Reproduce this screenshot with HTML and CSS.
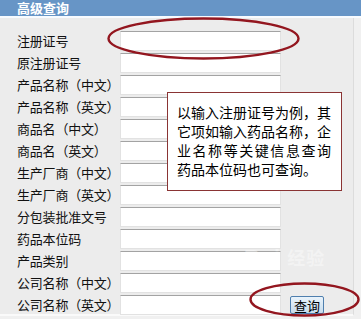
FILE: index.html
```html
<!DOCTYPE html>
<html lang="zh-CN">
<head>
<meta charset="utf-8">
<link rel="stylesheet" href="styles.css">
</head>
<body>
<div class="page">
  <div class="header">高级查询</div>
  <div class="panel">
    <form class="form">
      <div class="row"><label>注册证号</label><input type="text"></div>
      <div class="row"><label>原注册证号</label><input type="text"></div>
      <div class="row"><label>产品名称（中文）</label><input type="text"></div>
      <div class="row"><label>产品名称（英文）</label><input type="text"></div>
      <div class="row"><label>商品名（中文）</label><input type="text"></div>
      <div class="row"><label>商品名（英文）</label><input type="text"></div>
      <div class="row"><label>生产厂商（中文）</label><input type="text"></div>
      <div class="row"><label>生产厂商（英文）</label><input type="text"></div>
      <div class="row"><label>分包装批准文号</label><input type="text"></div>
      <div class="row"><label>药品本位码</label><input type="text"></div>
      <div class="row"><label>产品类别</label><input type="text"></div>
      <div class="row"><label>公司名称（中文）</label><input type="text"></div>
      <div class="row"><label>公司名称（英文）</label><input type="text"><button type="button" class="btn">查询</button></div>
    </form>
  </div>
  <div class="note">
    <span class="line">以输入注册证号为例，其</span>
    <span class="line">它项如输入药品名称，企</span>
    <span class="line justify">业名称等关键信息查询</span>
    <span class="line">药品本位码也可查询。</span>
  </div>
  <div class="watermark">Bai<span class="wm-cn">经验</span></div>
  <svg class="marks" width="361" height="319" viewBox="0 0 361 319">
    <ellipse cx="203.5" cy="38.5" rx="95" ry="20" fill="none" stroke="#93161f" stroke-width="2.4"/>
    <ellipse cx="304.5" cy="299.5" rx="54" ry="16" fill="none" stroke="#93161f" stroke-width="2.4"/>
  </svg>
</div>
</body>
</html>
```
FILE: styles.css
```css
html, body {
  margin: 0;
  padding: 0;
}
body {
  width: 361px;
  height: 319px;
  overflow: hidden;
  background: #f0f0f0;
  font-family: "Noto Sans CJK SC", "Noto Sans", sans-serif;
  color: #111;
}
.page {
  position: relative;
  width: 361px;
  height: 319px;
}
.header {
  height: 16px;
  background: #6795c6;
  color: #fff;
  font-weight: bold;
  font-size: 13px;
  line-height: 16px;
  padding-left: 17px;
  border-bottom: 2px solid #f7fbff;
}
.panel {
  width: 354px;
  height: 298px;
  background: #ececec;
  border-right: 1px solid #dcdcdc;
  border-bottom: 2px solid #fafafa;
  box-sizing: border-box;
}
.form {
  margin: 0;
  padding: 13px 0 0 17px;
  display: flex;
  flex-direction: column;
  gap: 2px;
}
.row {
  display: flex;
  align-items: center;
  height: 20px;
}
.row label {
  width: 103px;
  font-size: 13px;
  line-height: 20px;
  white-space: nowrap;
  letter-spacing: -0.2px;
}
.row input {
  width: 161px;
  height: 20px;
  box-sizing: border-box;
  margin: 0;
  padding: 0;
  border: 1px solid #e2e2e2;
  border-top-color: #a3a3a3;
  background: #fff;
}
.btn {
  margin: 0 0 0 9px;
  width: 34px;
  height: 18px;
  padding: 0;
  box-sizing: border-box;
  border: 1px solid #4e7fae;
  border-radius: 2px;
  background: linear-gradient(#e9f3fb, #c7dcec);
  font-family: "Noto Sans CJK SC", sans-serif;
  font-size: 13px;
  line-height: 15px;
  color: #000;
}
.note {
  position: absolute;
  left: 167px;
  top: 92px;
  width: 175px;
  height: 99px;
  box-sizing: border-box;
  border: 1px solid #8a3434;
  background: #fff;
  padding: 10px 10px 0 9px;
  font-size: 14px;
  line-height: 19px;
  color: #000;
}
.line {
  display: block;
  white-space: nowrap;
}
.justify {
  text-align: justify;
  text-align-last: justify;
}
.watermark {
  position: absolute;
  left: 244px;
  top: 244px;
  font-family: "Liberation Sans", sans-serif;
  font-size: 22px;
  font-weight: bold;
  color: rgba(255, 255, 255, 0.4);
  letter-spacing: 1px;
}
.wm-cn {
  font-family: "Noto Sans CJK SC", sans-serif;
  font-size: 18px;
  margin-left: 6px;
}
.marks {
  position: absolute;
  left: 0;
  top: 0;
  pointer-events: none;
}
```
